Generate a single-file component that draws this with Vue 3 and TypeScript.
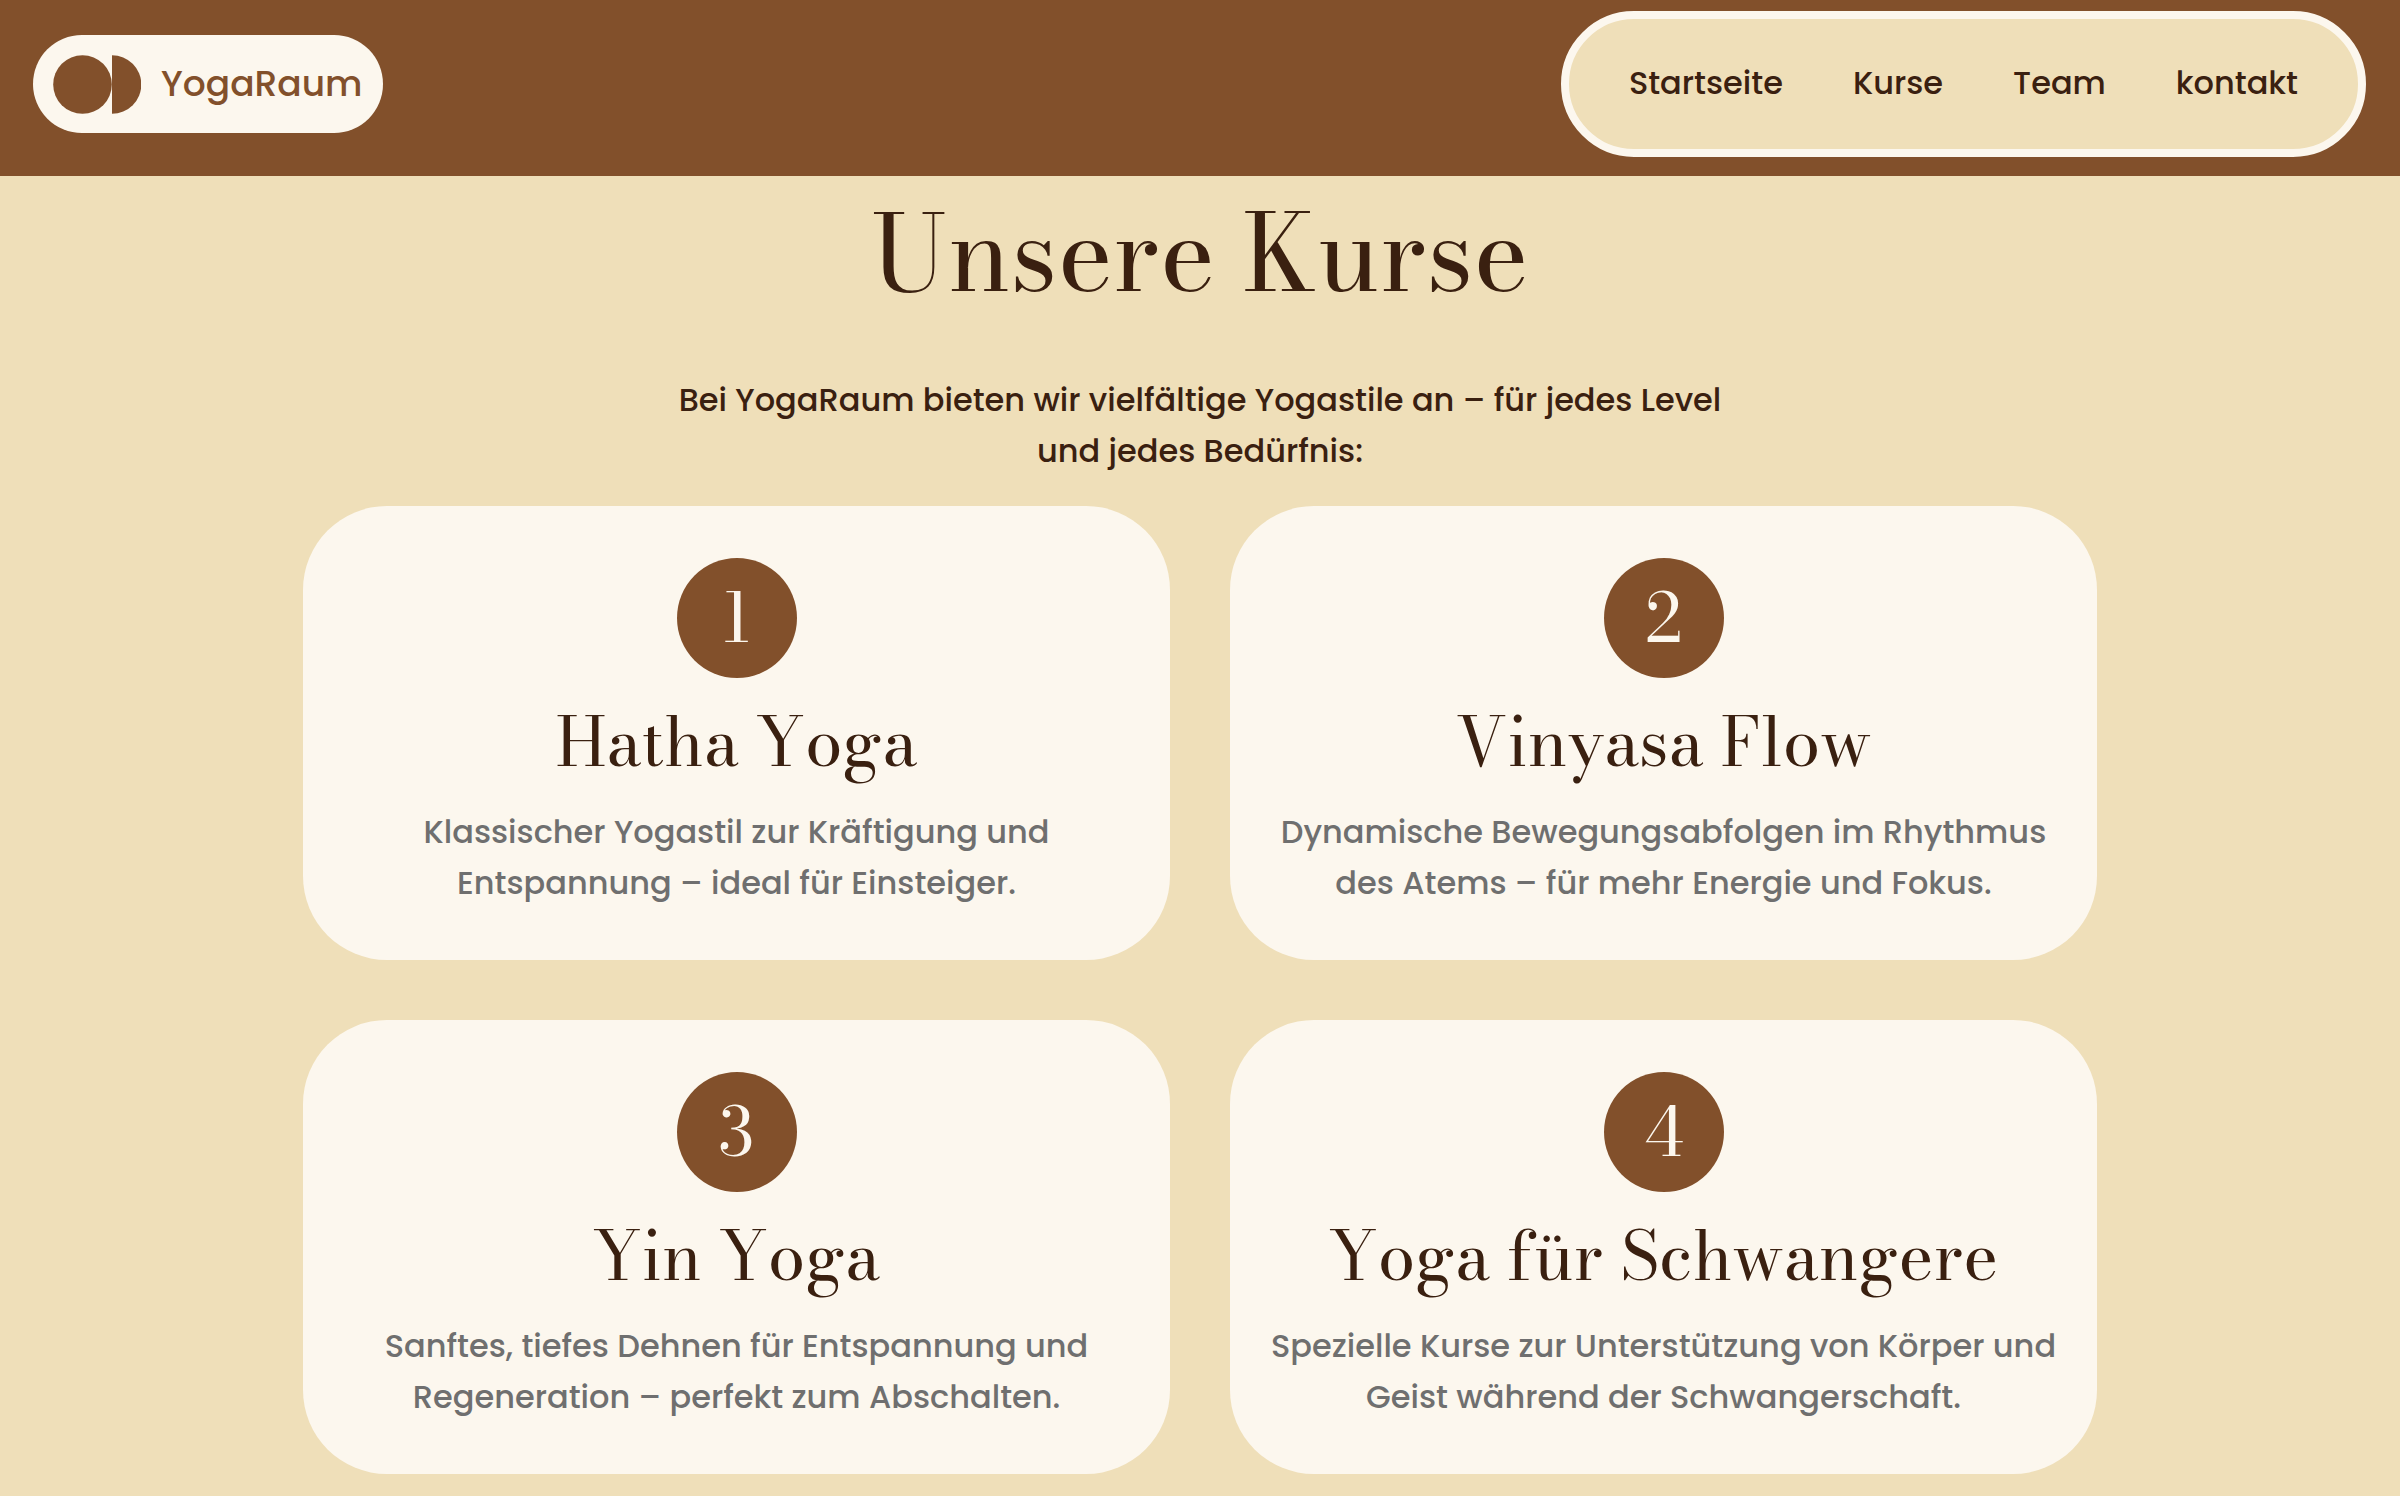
<script setup lang="ts">
interface Course {
  title: string
  text: string
}

const links: string[] = ['Startseite', 'Kurse', 'Team', 'kontakt']

const courses: Course[] = [
  { title: 'Hatha Yoga', text: 'Klassischer Yogastil zur Kräftigung und Entspannung – ideal für Einsteiger.' },
  { title: 'Vinyasa Flow', text: 'Dynamische Bewegungsabfolgen im Rhythmus des Atems – für mehr Energie und Fokus.' },
  { title: 'Yin Yoga', text: 'Sanftes, tiefes Dehnen für Entspannung und Regeneration – perfekt zum Abschalten.' },
  { title: 'Yoga für Schwangere', text: 'Spezielle Kurse zur Unterstützung von Körper und Geist während der Schwangerschaft.' },
]
</script>

<template>
  <div class="page">
    <header class="header">
      <a class="logo" href="#">
        <svg class="logo-mark" viewBox="0 0 88 60" aria-hidden="true">
          <circle cx="29.5" cy="30.5" r="29.3" />
          <path d="M59 1.2A29.3 29.3 0 0 1 59 59.8Z" />
        </svg>
        <span>YogaRaum</span>
      </a>
      <nav class="nav">
        <a v-for="link in links" :key="link" href="#">{{ link }}</a>
      </nav>
    </header>

    <main class="main">
      <h1>Unsere Kurse</h1>
      <p class="intro">Bei YogaRaum bieten wir vielfältige Yogastile an – für jedes Level und jedes Bedürfnis:</p>
      <section class="grid">
        <article v-for="(course, i) in courses" :key="course.title" class="card">
          <span class="number">{{ i + 1 }}</span>
          <h2>{{ course.title }}</h2>
          <p>{{ course.text }}</p>
        </article>
      </section>
    </main>
  </div>
</template>

<style>
body {
  background: #efdfb9;
}
</style>

<style scoped>
.page {
  color: #3a2010;
  font-family: Poppins, Inter, sans-serif;
  font-size: 32px;
  font-weight: 500;
  line-height: 51px;
}

.header {
  display: flex;
  align-items: center;
  justify-content: space-between;
  box-sizing: border-box;
  height: 176px;
  padding: 0 34px 8px 33px;
  background: #82502b;
}

.logo {
  display: flex;
  align-items: center;
  gap: 20px;
  height: 98px;
  padding: 0 20px;
  border-radius: 49px;
  background: #fcf7ee;
  color: #82502b;
  font-size: 36px;
  line-height: 48px;
  text-decoration: none;
}

.logo-mark {
  width: 88px;
  height: 60px;
  fill: #82502b;
}

.nav {
  display: flex;
  align-items: center;
  gap: 70px;
  box-sizing: border-box;
  height: 146px;
  padding: 0 60px 3px;
  border: 8px solid #fcf7ee;
  border-radius: 73px;
  background: #efdfb9;
}

.nav a {
  color: inherit;
  text-decoration: none;
}

.main {
  display: flex;
  flex-direction: column;
  align-items: center;
  padding-bottom: 20px;
}

h1,
h2,
.number {
  margin: 0;
  font-family: "Bodoni Moda", "Liberation Serif", serif;
  font-kerning: none;
  font-weight: 400;
}

h1 {
  font-size: 106px;
  line-height: 154px;
}

.intro {
  max-width: 1100px;
  margin: 44px 0 30px;
  text-align: center;
}

.grid {
  display: grid;
  grid-template-columns: repeat(2, 1fr);
  gap: 60px;
  box-sizing: border-box;
  width: 100%;
  padding: 0 303px;
}

.card {
  display: flex;
  flex-direction: column;
  align-items: center;
  padding: 52px 38px;
  border-radius: 84px;
  background: #fcf7ee;
  text-align: center;
}

.number {
  width: 120px;
  height: 120px;
  border-radius: 50%;
  background: #82502b;
  color: #fcf7ee;
  font-size: 67px;
  line-height: 120px;
}

h2 {
  margin: 18px 0;
  font-size: 67px;
  line-height: 92px;
}

.card p {
  margin: 0;
  color: #6f6f6f;
}
</style>
